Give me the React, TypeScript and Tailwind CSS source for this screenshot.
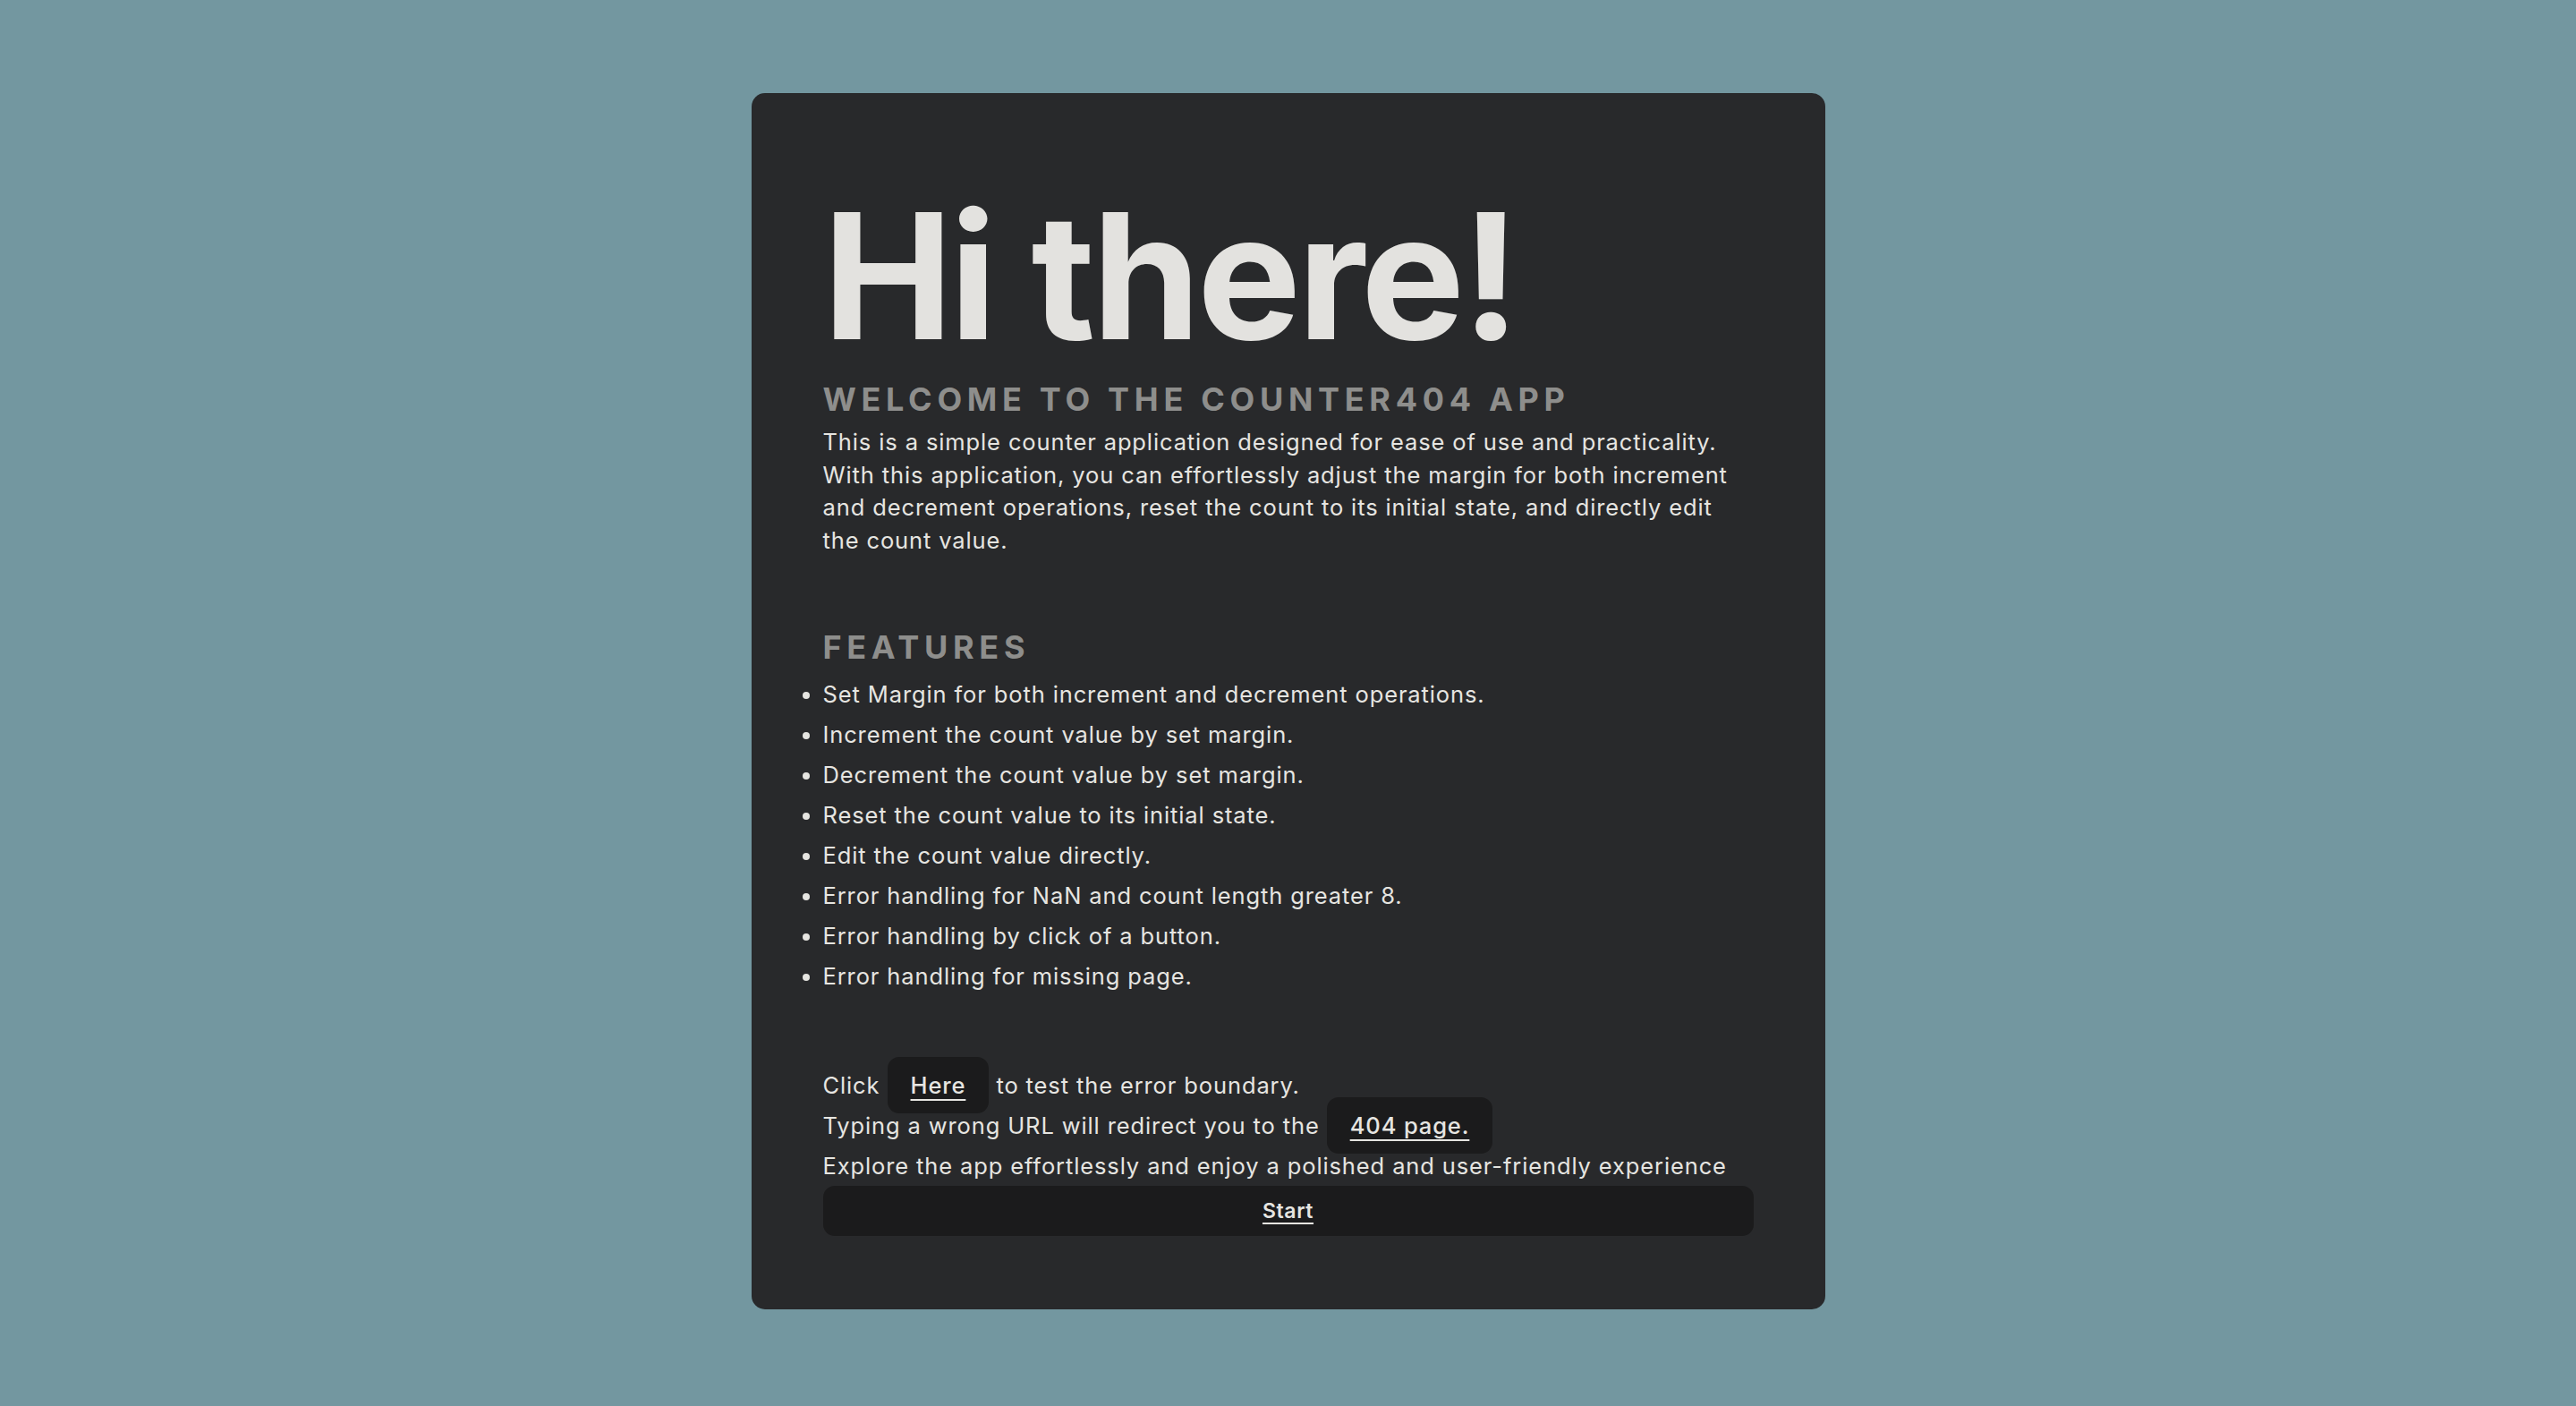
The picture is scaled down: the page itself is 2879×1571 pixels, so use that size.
export default function App() {
  const features = [
    "Set Margin for both increment and decrement operations.",
    "Increment the count value by set margin.",
    "Decrement the count value by set margin.",
    "Reset the count value to its initial state.",
    "Edit the count value directly.",
    "Error handling for NaN and count length greater 8.",
    "Error handling by click of a button.",
    "Error handling for missing page.",
  ];
  return (
    <div className="min-h-screen w-full bg-[#7397a0] flex justify-center pt-[104px] pb-[108px] font-[Inter,sans-serif]">
      <div className="w-[1200px] rounded-[15px] bg-[#28292b] px-[80px] pt-[88px] pb-[80px] text-[#e6e5e1]">
        <h1 className="text-[195px] font-bold leading-[232px] tracking-[-0.02em] text-[#e3e2df]">
          Hi there!
        </h1>
        <h2 className="text-[36px] font-bold leading-[44px] tracking-[0.158em] uppercase text-[#8e8e8c]">
          Welcome to the Counter404 App
        </h2>
        <p className="mt-2 text-[25.5px] leading-[36.5px] tracking-[0.88px]">
          This is a simple counter application designed for ease of use and practicality. With this
          application, you can effortlessly adjust the margin for both increment and decrement
          operations, reset the count to its initial state, and directly edit the count value.
        </p>
        <h2 className="mt-[79px] text-[36px] font-bold leading-[44px] tracking-[0.158em] uppercase text-[#8e8e8c]">
          Features
        </h2>
        <ul className="mt-2 list-disc text-[25.5px] leading-[45px] tracking-[0.88px]">
          {features.map((f) => (
            <li key={f}>{f}</li>
          ))}
        </ul>
        <div className="mt-[77px] text-[25.5px] leading-[45px] tracking-[0.88px]">
          <p>
            Click{" "}
            <a className="rounded-[13px] bg-[#1b1b1c] px-[26px] py-[16px] font-medium underline decoration-2 underline-offset-[6px] cursor-pointer">
              Here
            </a>{" "}
            to test the error boundary.
          </p>
          <p>
            Typing a wrong URL will redirect you to the{" "}
            <a className="rounded-[13px] bg-[#1b1b1c] px-[26px] py-[16px] font-medium underline decoration-2 underline-offset-[6px] cursor-pointer">
              404 page.
            </a>
          </p>
          <p>Explore the app effortlessly and enjoy a polished and user-friendly experience</p>
        </div>
        <button className="w-full h-[56px] rounded-[13px] bg-[#1b1b1c] text-[23px] font-semibold tracking-[0.6px] underline decoration-2 underline-offset-[5px] text-[#e6e5e1]">
          Start
        </button>
      </div>
    </div>
  );
}
